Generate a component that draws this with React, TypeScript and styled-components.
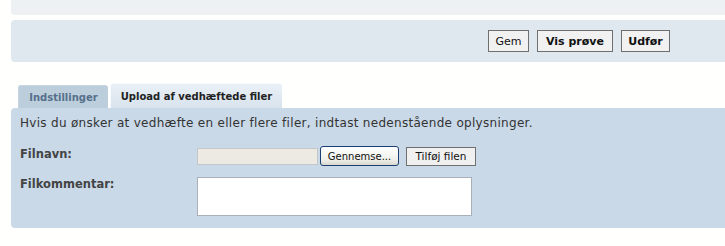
import React from "react";
import styled, { createGlobalStyle } from "styled-components";

const GlobalStyle = createGlobalStyle`
    body {
        margin: 0;
        background: #fffffd;
        font-family: "DejaVu Sans", Verdana, sans-serif;
        color: #333;
    }
`;

const Page = styled.div`
    padding-left: 11px;
    display: flex;
    flex-direction: column;
`;

const TopPanel = styled.div`
    height: 15px;
    background: #edf1f4;
    border-radius: 0 0 0 4px;
`;

const ActionPanel = styled.div`
    margin-top: 5px;
    height: 42px;
    background: #dfe8ef;
    border-radius: 4px 0 0 4px;
    display: flex;
    align-items: center;
    justify-content: flex-end;
    gap: 8px;
    padding-right: 55px;
`;

const ActionButton = styled.button<{ $bold?: boolean; $width: number }>`
    width: ${p => p.$width}px;
    height: 22px;
    padding: 0;
    background: #f1f1f1;
    border: 1px solid #6f6f6f;
    border-radius: 0;
    font-family: "DejaVu Sans", Verdana, sans-serif;
    font-size: 11px;
    font-weight: ${p => (p.$bold ? 700 : 400)};
    color: #111;
`;

const TabBar = styled.div`
    margin-top: 21px;
    padding-left: 7px;
    display: flex;
    align-items: flex-end;
    gap: 2px;
`;

const Tab = styled.div<{ $active?: boolean; $width: number }>`
    width: ${p => p.$width}px;
    height: ${p => (p.$active ? 25 : 23)}px;
    box-sizing: border-box;
    display: flex;
    align-items: center;
    justify-content: center;
    font-size: 10px;
    font-weight: 700;
    border-radius: 3px 3px 0 0;
    color: ${p => (p.$active ? "#222" : "#55708c")};
    background: ${p =>
        p.$active ? "linear-gradient(#eaf0f6, #d8e3ee)" : "#bccddb"};
    border-top: 1px solid ${p => (p.$active ? "#f7fafc" : "#c6d5e1")};
    border-left: 1px solid ${p => (p.$active ? "#f7fafc" : "#c6d5e1")};
    padding-top: ${p => (p.$active ? 1 : 0)}px;
`;

const ContentPanel = styled.div`
    background: #c9d9e8;
    border-radius: 4px 0 0 4px;
    padding: 8px 0 12px 9px;
    display: flex;
    flex-direction: column;
`;

const Intro = styled.div`
    font-size: 12px;
    line-height: 14px;
    color: #333;
    letter-spacing: 0.3px;
`;

const FormRow = styled.div<{ $top: number }>`
    margin-top: ${p => p.$top}px;
    display: grid;
    grid-template-columns: 177px auto;
    align-items: start;
`;

const Label = styled.div<{ $offset: number }>`
    padding-top: ${p => p.$offset}px;
    font-size: 11.5px;
    font-weight: 700;
    color: #444;
`;

const Controls = styled.div`
    display: flex;
    align-items: center;
`;

const FileBox = styled.div`
    width: 121px;
    height: 17px;
    box-sizing: border-box;
    background: #eceae2;
    border: 1px solid #c4c7c9;
`;

const BrowseButton = styled.button`
    margin-left: 2px;
    width: 79px;
    height: 20px;
    padding: 0;
    border: 1px solid #1c3f73;
    border-radius: 3px;
    background: linear-gradient(#ffffff, #f0f0ea 70%, #d8d8d0);
    font-family: "DejaVu Sans", Verdana, sans-serif;
    font-size: 10px;
    color: #111;
`;

const AddButton = styled.button`
    margin-left: 7px;
    width: 70px;
    height: 19px;
    padding: 0;
    border: 1px solid #6f6f6f;
    border-radius: 0;
    background: #f0f0f0;
    font-family: "DejaVu Sans", Verdana, sans-serif;
    font-size: 10.5px;
    color: #111;
`;

const CommentBox = styled.textarea`
    width: 275px;
    height: 39px;
    box-sizing: border-box;
    margin: 0;
    resize: none;
    background: #fff;
    border: 1px solid #a9b0b8;
    display: block;
`;

export default function App() {
    return (
        <>
            <GlobalStyle />
            <Page>
                <TopPanel />
                <ActionPanel>
                    <ActionButton $width={41}>Gem</ActionButton>
                    <ActionButton $width={76} $bold>Vis prøve</ActionButton>
                    <ActionButton $width={49} $bold>Udfør</ActionButton>
                </ActionPanel>
                <TabBar>
                    <Tab $width={90}>Indstillinger</Tab>
                    <Tab $width={172} $active>Upload af vedhæftede filer</Tab>
                </TabBar>
                <ContentPanel>
                    <Intro>
                        Hvis du ønsker at vedhæfte en eller flere filer, indtast nedenstående oplysninger.
                    </Intro>
                    <FormRow $top={16}>
                        <Label $offset={1}>Filnavn:</Label>
                        <Controls>
                            <FileBox />
                            <BrowseButton>Gennemse...</BrowseButton>
                            <AddButton>Tilføj filen</AddButton>
                        </Controls>
                    </FormRow>
                    <FormRow $top={11}>
                        <Label $offset={0}>Filkommentar:</Label>
                        <CommentBox />
                    </FormRow>
                </ContentPanel>
            </Page>
        </>
    );
}
